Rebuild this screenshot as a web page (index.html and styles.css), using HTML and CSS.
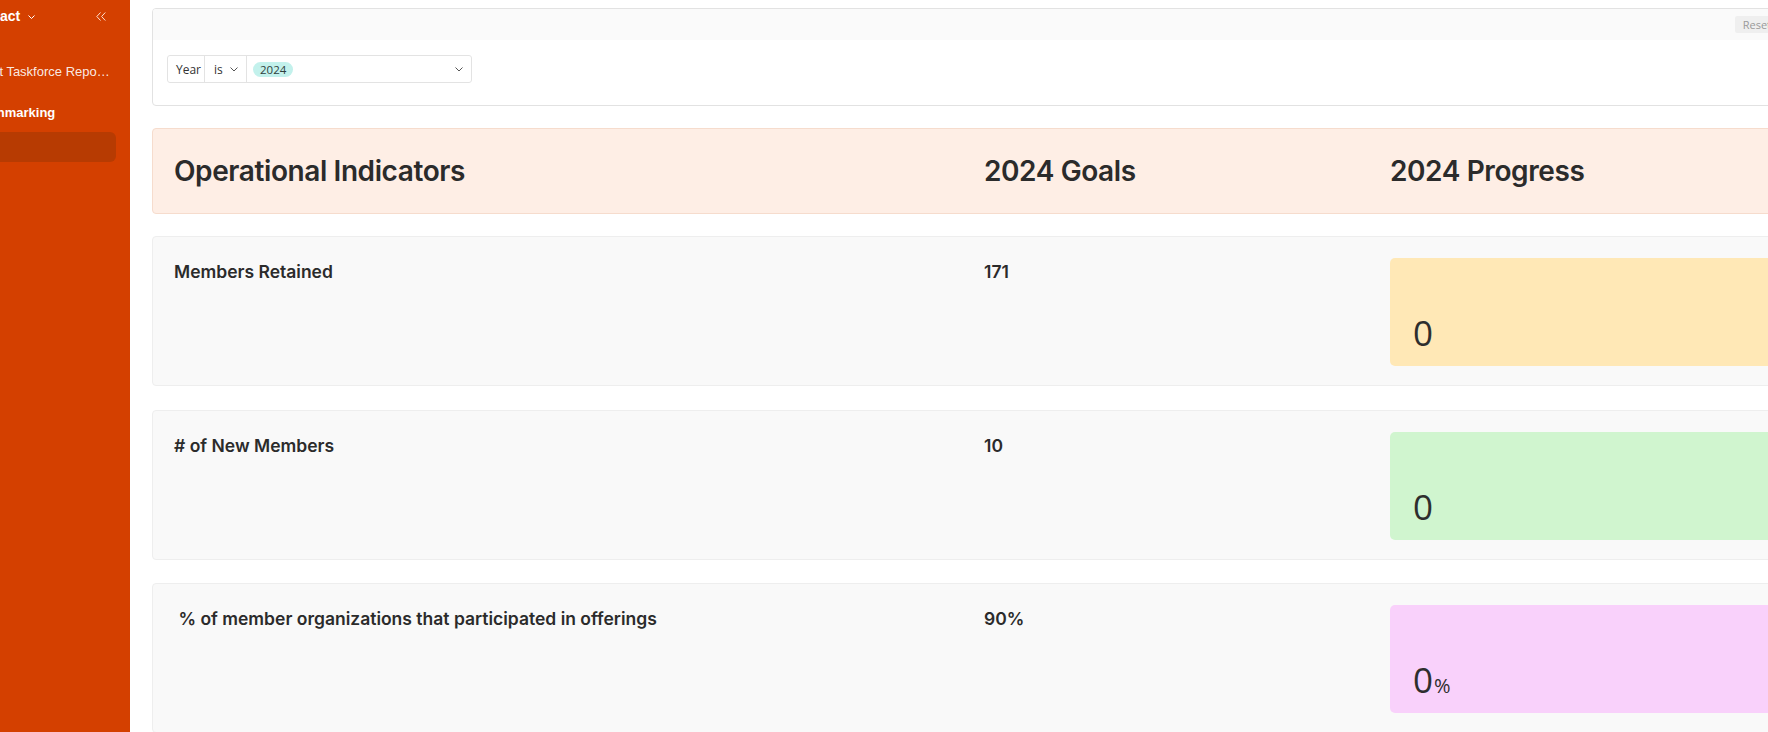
FILE: index.html
```html
<!DOCTYPE html>
<html lang="en">
<head>
<meta charset="utf-8">
<title>Operational Indicators</title>
<link rel="stylesheet" href="styles.css">
</head>
<body>
<div class="app">
  <aside class="sidebar">
    <div class="sb-inner">
      <div class="sb-head">
        <span class="sb-title">Impact</span>
        <svg class="sb-caret" width="7" height="4" viewBox="0 0 7 4"><path d="M0.5 0.5 L3.5 3.5 L6.5 0.5" fill="none" stroke="#fff" stroke-width="1"/></svg>
        <span class="sb-spacer"></span>
        <svg class="sb-collapse" width="10" height="9" viewBox="0 0 10 9"><path d="M4.5 0.5 L0.8 4.5 L4.5 8.5 M9.3 0.5 L5.6 4.5 L9.3 8.5" fill="none" stroke="#fde0cf" stroke-width="1"/></svg>
      </div>
      <div class="sb-item">Impact Taskforce Reports</div>
      <div class="sb-group">Benchmarking</div>
      <div class="sb-item sb-active"></div>
    </div>
  </aside>

  <main class="main">
    <section class="filter-card">
      <div class="filter-top">
        <button class="btn-reset">Reset</button>
      </div>
      <div class="filter-body">
        <div class="filter">
          <div class="seg seg-field">Year</div>
          <div class="seg seg-op">is
            <svg width="8" height="5" viewBox="0 0 8 5"><path d="M0.5 0.5 L4 4 L7.5 0.5" fill="none" stroke="#555" stroke-width="1"/></svg>
          </div>
          <div class="seg seg-val">
            <span class="chip">2024</span>
            <svg width="8" height="5" viewBox="0 0 8 5"><path d="M0.5 0.5 L4 4 L7.5 0.5" fill="none" stroke="#555" stroke-width="1"/></svg>
          </div>
        </div>
      </div>
    </section>

    <section class="table-head grid">
      <div class="th">Operational Indicators</div>
      <div class="th">2024 Goals</div>
      <div class="th">2024 Progress</div>
    </section>

    <section class="row grid">
      <div class="label">Members Retained</div>
      <div class="label">171</div>
      <div class="progress p-yellow"><span class="num">0</span></div>
    </section>

    <section class="row grid">
      <div class="label"># of New Members</div>
      <div class="label">10</div>
      <div class="progress p-green"><span class="num">0</span></div>
    </section>

    <section class="row grid">
      <div class="label">&nbsp;% of member organizations that participated in offerings</div>
      <div class="label">90%</div>
      <div class="progress p-pink"><span class="num">0</span><span class="unit">%</span></div>
    </section>
  </main>
</div>
</body>
</html>
```

FILE: styles.css
```css
* { box-sizing: border-box; }

html, body {
  margin: 0;
  padding: 0;
  height: 100%;
  overflow: hidden;
  background: #ffffff;
}

body {
  font-family: "Inter", "Noto Sans", sans-serif;
  color: #2b2b2b;
}

.app {
  display: flex;
  height: 732px;
  overflow: hidden;
}

/* ---------- sidebar ---------- */
.sidebar {
  flex: 0 0 130px;
  width: 130px;
  background: #d44000;
  overflow: hidden;
  font-family: "Liberation Sans", "Noto Sans", sans-serif;
  color: #ffffff;
}

.sb-inner {
  width: 171px;
  margin-left: -41px;
  display: flex;
  flex-direction: column;
}

.sb-head {
  height: 32px;
  display: flex;
  align-items: center;
  padding-left: 16px;
  padding-right: 24px;
  white-space: nowrap;
}

.sb-title {
  font-weight: 700;
  font-size: 14px;
  line-height: 20px;
}

.sb-caret { margin-left: 8px; margin-top: 2px; }

.sb-spacer { flex: 1; }

.sb-item {
  height: 30px;
  line-height: 30px;
  font-size: 13px;
  color: rgba(255, 255, 255, 0.9);
  white-space: nowrap;
  overflow: hidden;
  text-overflow: ellipsis;
  margin-top: 25px;
  margin-right: 20px;
  padding-left: 5px;
}

.sb-group {
  height: 30px;
  line-height: 30px;
  font-size: 13px;
  font-weight: 700;
  margin-top: 11px;
  padding-left: 6px;
  white-space: nowrap;
}

.sb-active {
  margin-top: 4px;
  margin-right: 14px;
  padding-left: 0;
  background: #b73b02;
  border-radius: 6px;
}

/* ---------- main ---------- */
.main {
  flex: 0 0 auto;
  width: 1722px;
  padding: 8px 0 0 22px;
  display: flex;
  flex-direction: column;
}

.main > section { width: 1700px; flex: 0 0 auto; }

/* filter card */
.filter-card {
  border: 1px solid #e2e2e2;
  border-radius: 4px;
  background: #ffffff;
  margin-bottom: 22px;
  overflow: hidden;
}

.filter-top {
  height: 31px;
  background: #fafafa;
  display: flex;
  justify-content: flex-end;
  align-items: flex-start;
  padding: 7px 72px 0 0;
}

.btn-reset {
  font-family: "Open Sans", "Noto Sans", sans-serif;
  font-size: 11px;
  color: #9a9a9a;
  background: #efefef;
  border: none;
  border-radius: 2px;
  height: 17px;
  line-height: 17px;
  padding: 0 8px;
}

.filter-body {
  height: 65px;
  padding: 15px 0 0 14px;
}

.filter {
  display: flex;
  width: 305px;
  height: 28px;
  border: 1px solid #e3e3e3;
  border-radius: 3px;
  font-family: "Open Sans", "Noto Sans", sans-serif;
  font-size: 12px;
  color: #333;
}

.seg {
  display: flex;
  align-items: center;
}

.seg-field {
  width: 37px;
  padding-left: 8px;
  border-right: 1px solid #e3e3e3;
}

.seg-op {
  width: 42px;
  padding-left: 9px;
  gap: 7px;
  border-right: 1px solid #e3e3e3;
}

.seg-val {
  flex: 1;
  padding: 0 8px 0 6px;
  justify-content: space-between;
}

.chip {
  background: #c3f1ec;
  border-radius: 8px;
  height: 15px;
  line-height: 15px;
  padding: 0 7px;
  font-size: 11.5px;
  color: #2f3f3d;
}

/* grid rows */
.grid {
  display: grid;
  grid-template-columns: 810px 406px 1fr;
  align-items: start;
}

.table-head {
  height: 86px;
  background: #feeee5;
  border: 1px solid #f6dccd;
  border-radius: 4px;
  padding: 0 21px;
  align-items: center;
  margin-bottom: 22px;
}

.th {
  font-size: 28px;
  font-weight: 600;
  letter-spacing: -0.4px;
  color: #2b2b2b;
}

.row {
  height: 150px;
  background: #f9f9f9;
  border: 1px solid #eeeeee;
  border-radius: 4px;
  padding: 21px 21px 0 21px;
  margin-bottom: 23.5px;
}

.label {
  font-size: 17.5px;
  font-weight: 600;
  line-height: 25px;
  padding-top: 1px;
  color: #2b2b2b;
}

.progress {
  height: 108px;
  border-radius: 5px;
  display: flex;
  align-items: flex-end;
  padding: 0 23px 16px 23px;
  font-family: "Open Sans", "Noto Sans", sans-serif;
  color: #2e2e2e;
}

.num {
  font-size: 35px;
  line-height: 1;
}

.unit {
  font-size: 20px;
  line-height: 1;
  margin-left: 1px;
  padding-bottom: 1px;
}

.p-yellow { background: #ffe8b6; }
.p-green { background: #d0f5cf; }
.p-pink { background: #f9d1fb; }
```
